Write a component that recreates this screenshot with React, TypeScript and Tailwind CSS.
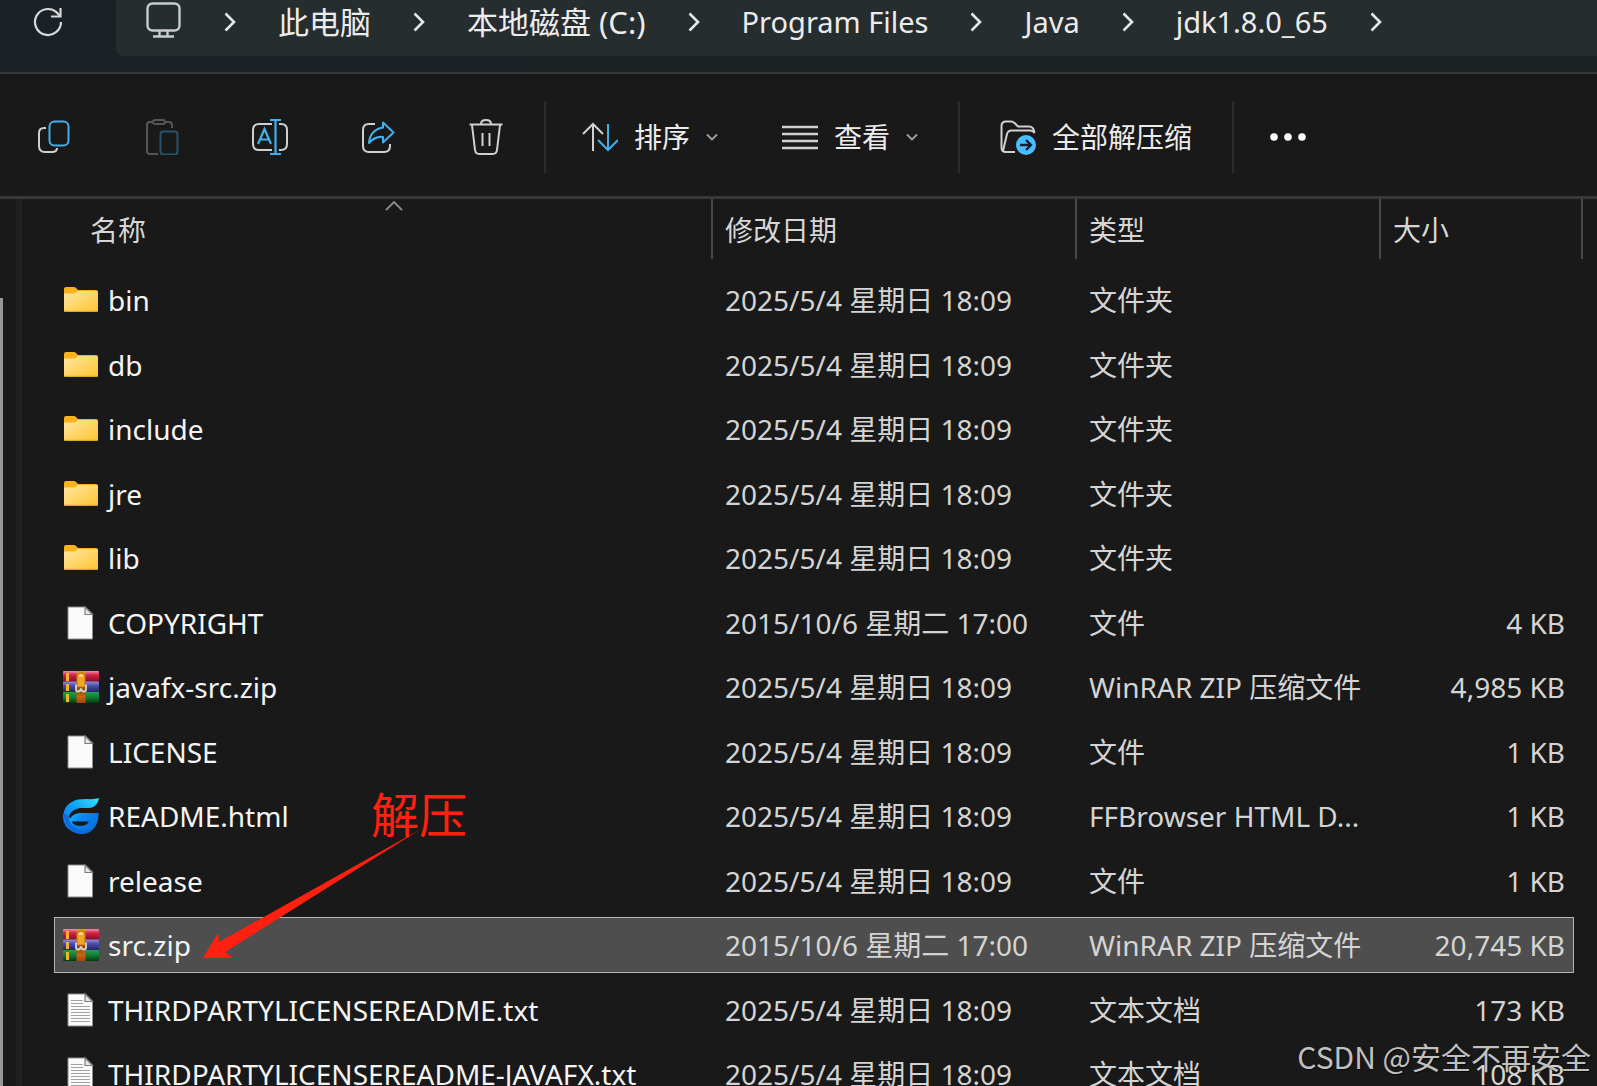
import { Fragment, useState } from 'react';

type FileKind = 'folder' | 'file' | 'zip' | 'html' | 'text';

interface FileEntry {
  name: string;
  kind: FileKind;
  modified: string;
  type: string;
  size?: string;
}

const crumbs = [
  { label: '此电脑', latin: false },
  { label: '本地磁盘 (C:)', latin: false },
  { label: 'Program Files', latin: true },
  { label: 'Java', latin: true },
  { label: 'jdk1.8.0_65', latin: true },
];

const may = '2025/5/4 星期日 18:09';
const october = '2015/10/6 星期二 17:00';

const files: FileEntry[] = [
  { name: 'bin', kind: 'folder', modified: may, type: '文件夹' },
  { name: 'db', kind: 'folder', modified: may, type: '文件夹' },
  { name: 'include', kind: 'folder', modified: may, type: '文件夹' },
  { name: 'jre', kind: 'folder', modified: may, type: '文件夹' },
  { name: 'lib', kind: 'folder', modified: may, type: '文件夹' },
  { name: 'COPYRIGHT', kind: 'file', modified: october, type: '文件', size: '4 KB' },
  { name: 'javafx-src.zip', kind: 'zip', modified: may, type: 'WinRAR ZIP 压缩文件', size: '4,985 KB' },
  { name: 'LICENSE', kind: 'file', modified: may, type: '文件', size: '1 KB' },
  { name: 'README.html', kind: 'html', modified: may, type: 'FFBrowser HTML D...', size: '1 KB' },
  { name: 'release', kind: 'file', modified: may, type: '文件', size: '1 KB' },
  { name: 'src.zip', kind: 'zip', modified: october, type: 'WinRAR ZIP 压缩文件', size: '20,745 KB' },
  { name: 'THIRDPARTYLICENSEREADME.txt', kind: 'text', modified: may, type: '文本文档', size: '173 KB' },
  { name: 'THIRDPARTYLICENSEREADME-JAVAFX.txt', kind: 'text', modified: may, type: '文本文档', size: '108 KB' },
];

const FolderIcon = () => (
  <svg viewBox="0 0 36 36" className="w-9 h-9">
    <defs>
      <linearGradient id="folder" x1="0" y1="0" x2="1" y2="1">
        <stop offset="0" stopColor="#ffe7a2" />
        <stop offset="1" stopColor="#fdc42f" />
      </linearGradient>
    </defs>
    <path d="M1 7q0-2 2-2h8q1 0 2 1l2 2h18q2 0 2 2v6H1z" fill="#f8b31c" />
    <path d="M1 11.500h11l3-2.500h18.500q1.500 0 1.500 1.500V28.500q0 1.500-1.500 1.500h-31Q1 30 1 28.500z" fill="url(#folder)" />
    <path d="M1.500 29.300h33" stroke="#d9a01f" strokeWidth="1" />
  </svg>
);

const PageIcon = ({ lined = false }: { lined?: boolean }) => (
  <svg viewBox="0 0 36 36" className="w-9 h-9">
    <path d="M5 2h17.500L29.500 9v25H5z" fill="#fafafa" stroke="#8d8d8d" strokeWidth="1" />
    <path d="M22 2v7.500h7.500z" fill="#e8e8e8" stroke="#7c7c7c" strokeWidth="1.200" />
    {lined && (
      <path d="M8 8.500h12M8 11.500h12M8 14.500h19M8 17.500h19M8 20.500h19M8 23.500h19M8 26.500h19M8 29.500h19" stroke="#a3a3a3" strokeWidth="1.200" />
    )}
  </svg>
);

const ZipIcon = () => (
  <svg viewBox="0 0 36 36" className="w-9 h-9">
    <defs>
      <linearGradient id="zipRed" x1="0" y1="0" x2="0" y2="1">
        <stop offset="0" stopColor="#f58fb0" />
        <stop offset="0.350" stopColor="#d4244a" />
        <stop offset="1" stopColor="#7d0d22" />
      </linearGradient>
      <linearGradient id="zipBlue" x1="0" y1="0" x2="0" y2="1">
        <stop offset="0" stopColor="#8f8fdc" />
        <stop offset="0.400" stopColor="#4a4aa8" />
        <stop offset="1" stopColor="#23235f" />
      </linearGradient>
      <linearGradient id="zipGreen" x1="0" y1="0" x2="0" y2="1">
        <stop offset="0" stopColor="#1fa257" />
        <stop offset="0.500" stopColor="#127a35" />
        <stop offset="1" stopColor="#06380f" />
      </linearGradient>
      <linearGradient id="zipStrap" x1="0" y1="0" x2="0" y2="1">
        <stop offset="0" stopColor="#d79a25" />
        <stop offset="0.600" stopColor="#8f4a0c" />
        <stop offset="0.800" stopColor="#cc6414" />
        <stop offset="1" stopColor="#a8440a" />
      </linearGradient>
    </defs>
    <rect x="0" y="2" width="36" height="11" rx="1" fill="url(#zipRed)" />
    <rect x="0" y="12.500" width="36" height="11" rx="1" fill="url(#zipBlue)" />
    <rect x="0" y="23" width="36" height="11" rx="1" fill="url(#zipGreen)" />
    <path d="M3 4h3v8H3zM3 15h3v7H3zM3 25h3v8H3z" fill="#f5b326" />
    <rect x="13.500" y="2" width="9" height="32" fill="url(#zipStrap)" />
    <path d="M14 8q0-4 4-4t4 4v10h-8z" fill="#f0a526" stroke="#b56a10" strokeWidth="0.800" />
    <path d="M16 7.500q2-2.500 4 0" stroke="#ffe98a" strokeWidth="1.800" fill="none" />
    <path d="M13 15.500v5q0 2 2 2 2.500 0 3-3 .5 3 3 3 2 0 2-2v-5" stroke="#d4d4d4" strokeWidth="1.800" fill="none" />
  </svg>
);

const BrowserIcon = () => (
  <svg viewBox="0 0 36 36" className="w-9 h-9">
    <defs>
      <linearGradient id="ffTop" x1="0" y1="1" x2="1" y2="0">
        <stop offset="0" stopColor="#0b7ff0" />
        <stop offset="0.450" stopColor="#0a95f5" />
        <stop offset="1" stopColor="#35e0fa" />
      </linearGradient>
      <linearGradient id="ffBottom" x1="0" y1="0" x2="1" y2="0.500">
        <stop offset="0" stopColor="#19d2fb" />
        <stop offset="0.500" stopColor="#0a86f2" />
        <stop offset="1" stopColor="#0b6fdf" />
      </linearGradient>
    </defs>
    <path d="M36 0q-1 6-5 8.500Q29 10 25 10H17Q9 11 6 18 4 24 8 29l2 5Q0 29 0 18.500 1 5 15 1.500 18 1 24 1 32 1.500 36 0z" fill="url(#ffTop)" />
    <path d="M1 15q-1 8 4 14 5 7 14 7 9-.5 13.500-8Q36 22 35.500 15H16Q8 16 6 23.500h20q-2 4-8 4.500Q8 28 6 18z" fill="url(#ffBottom)" />
    <path d="M1 15q-1 8 4 14 5 7 14 7 7-.5 11-5-13 4-20-3Q5 23 6 18z" fill="#0a6bdc" />
  </svg>
);

const FileIcon = ({ kind }: { kind: FileKind }) => {
  if (kind === 'folder') return <FolderIcon />;
  if (kind === 'zip') return <ZipIcon />;
  if (kind === 'html') return <BrowserIcon />;
  return <PageIcon lined={kind === 'text'} />;
};

const CrumbChevron = () => (
  <svg viewBox="0 0 12 20" className="w-3 h-5 mx-[42px] shrink-0" fill="none" stroke="#e6e6e6" strokeWidth="2.600">
    <path d="M1.500 1.500 10 10l-8.500 8.500" />
  </svg>
);

const DownChevron = () => (
  <svg viewBox="0 0 12 8" className="w-3 h-2" fill="none" stroke="#a0a0a0" strokeWidth="1.800">
    <path d="M1 1.500l5 5 5-5" />
  </svg>
);

const iconProps = { viewBox: '0 0 36 36', className: 'w-9 h-9', fill: 'none', stroke: '#d0d0d0', strokeWidth: 2 };

const tools = [
  {
    label: '复制',
    icon: (
      <svg {...iconProps}>
        <path d="M10 9H8q-5 0-5 5v13q0 6 6 6h7q5 0 5-4" />
        <rect x="13.500" y="2.500" width="19" height="24" rx="5" stroke="#42b0ea" />
      </svg>
    ),
  },
  {
    label: '粘贴',
    disabled: true,
    icon: (
      <svg {...iconProps} stroke="#565656">
        <path d="M9 3H6Q3 3 3 6v26q0 3 3 3h8M21 3h4q3 0 3 3v3" />
        <rect x="9" y="1" width="12" height="4" rx="2" />
        <rect x="16.500" y="12.500" width="17" height="23" rx="3" stroke="#275268" />
      </svg>
    ),
  },
  {
    label: '重命名',
    icon: (
      <svg {...iconProps}>
        <path d="M20 5H7Q1 5 1 11v14q0 6 6 6h13M27 5h2q6 0 6 6v14q0 6-6 6h-2" />
        <path d="M6 25l6.500-15L19 25M8.500 20.500h8" stroke="#42b0ea" strokeWidth="2.200" />
        <path d="M18 1h11M18 35h11M23.500 1v34" stroke="#42b0ea" strokeWidth="2.200" />
      </svg>
    ),
  },
  {
    label: '共享',
    icon: (
      <svg {...iconProps}>
        <path d="M15 5H9Q3 5 3 11v16q0 6 6 6h15q6 0 6-6v-2" />
        <path d="M23 3.500 33.500 13.500 23 23.500V18q-8-1-14 6 1-13 14-15.500z" stroke="#42b0ea" strokeLinejoin="round" />
      </svg>
    ),
  },
  {
    label: '删除',
    icon: (
      <svg {...iconProps}>
        <path d="M1.500 5.500h33M4 6l3 25q.5 4 4.500 4h13q4 0 4.500-4l3-25M13 5q0-4 5-4t5 4M14.500 14v13M21.500 14v13" />
      </svg>
    ),
  },
];

const Separator = () => <span className="w-0.5 h-18 mx-2 bg-[#2c2c2c]" />;

const cellBox = 'h-14 flex items-center border-y';

export default function App() {
  const [selected, setSelected] = useState('src.zip');

  return (
    <div className="relative h-screen overflow-hidden flex flex-col bg-[#191919] text-[#ececec] font-['Noto_Sans','Noto_Sans_CJK_SC',sans-serif]">
      <header className="h-[74px] shrink-0 flex items-start border-b-2 border-[#383838] bg-linear-to-r from-[#1a2127] to-[#1a2224] to-40%">
        <button aria-label="刷新" className="w-[116px] h-11 pr-5 flex items-center justify-center">
          <svg viewBox="0 0 30 30" className="w-[30px] h-[30px]" fill="none" stroke="#d8d8d8" strokeWidth="2.200">
            <path d="M28 15A13 13 0 1 1 23.500 5.200L27 9" />
            <path d="M27.500 1v8.500H18" />
          </svg>
        </button>
        <nav aria-label="地址" className="flex-1 h-14 pb-3 pl-[30px] flex items-center rounded-bl-lg bg-[#262d2f] leading-10 whitespace-nowrap">
          <svg viewBox="0 0 36 36" className="w-9 h-9 shrink-0 -mt-1" fill="none" stroke="#c9cbcb" strokeWidth="2.400">
            <rect x="1.500" y="1.500" width="32" height="27" rx="5" />
            <path d="M13.500 29v5M21.500 29v5M7 34.500h21" />
          </svg>
          <CrumbChevron />
          {crumbs.map((crumb) => (
            <Fragment key={crumb.label}>
              <button className={crumb.latin ? 'text-[29px]' : 'text-[31px]'}>{crumb.label}</button>
              <CrumbChevron />
            </Fragment>
          ))}
        </nav>
      </header>

      <div role="toolbar" className="h-[125px] pt-[3px] shrink-0 flex items-center border-b-3 border-[#383838] text-[28px] leading-9 whitespace-nowrap">
        {tools.map((tool) => (
          <button key={tool.label} aria-label={tool.label} disabled={tool.disabled} className="w-27 h-18 flex items-center justify-center">
            {tool.icon}
          </button>
        ))}
        <span className="w-0.5 h-18 mx-1 bg-[#2c2c2c]" />
        <button className="flex items-center gap-4 px-8">
          <svg {...iconProps}>
            <path d="M11 32V5M1 15 11 5l10 10" />
            <path d="M26 5v26M16 21l10 10 10-10" stroke="#42b0ea" />
          </svg>
          排序
          <DownChevron />
        </button>
        <button className="flex items-center gap-4 px-8">
          <svg {...iconProps} strokeWidth={2.4}>
            <path d="M0 8h36M0 15h36M0 22h36M0 29h36" />
          </svg>
          查看
          <DownChevron />
        </button>
        <Separator />
        <button className="flex items-center gap-4 px-8">
          <svg {...iconProps}>
            <path d="M15 33H6q-4.500 0-4.500-4.500V7Q1.500 2.500 6 2.500h5q2 0 3.500 1.500L18 7.500h11q4.500 0 5.500 6" />
            <path d="M3 32 7 15q1-3.500 4.500-3.500H30q3 0 4.500 2.500" />
            <circle cx="26" cy="26" r="10" fill="#48bdff" stroke="none" />
            <path d="M20 26h11M26 21l5 5-5 5" stroke="#10202c" strokeWidth={2.4} />
          </svg>
          全部解压缩
        </button>
        <Separator />
        <button aria-label="更多" className="px-7">
          <svg viewBox="0 0 36 8" className="w-9 h-2" fill="#ffffff">
            <circle cx="4" cy="4" r="3.800" />
            <circle cx="18" cy="4" r="3.800" />
            <circle cx="32" cy="4" r="3.800" />
          </svg>
        </button>
      </div>

      <main className="flex-1 min-h-0 flex">
        <div className="w-[22px] shrink-0 border-r-6 border-[#212121]">
          <div className="w-[3px] h-full mt-[99px] bg-[#989898]" />
        </div>

        <div className="relative flex-1 pl-8 pr-[23px]">
          <table className="w-full table-fixed border-collapse text-[28px] leading-9 text-left whitespace-nowrap">
            <colgroup>
              <col />
              <col className="w-[364px]" />
              <col className="w-[304px]" />
              <col className="w-[193px]" />
            </colgroup>
            <thead className="text-[#d6d6d6]">
              <tr className="h-[69px] align-top">
                <th className="relative p-0 font-normal" aria-sort="ascending">
                  <button className="w-full h-15 pl-9 pt-0.5 text-left border-r-2 border-[#484848]">名称</button>
                  <svg viewBox="0 0 18 10" className="absolute top-0.5 left-[331px] w-[18px] h-2.5" fill="none" stroke="#8a8a8a" strokeWidth="1.800">
                    <path d="M1 9l8-8 8 8" />
                  </svg>
                </th>
                <th className="p-0 font-normal">
                  <button className="w-full h-15 pl-3 pt-0.5 text-left border-r-2 border-[#484848]">修改日期</button>
                </th>
                <th className="p-0 font-normal">
                  <button className="w-full h-15 pl-3 pt-0.5 text-left border-r-2 border-[#484848]">类型</button>
                </th>
                <th className="relative p-0 font-normal">
                  <button className="w-full h-15 pl-3 pt-0.5 text-left">大小</button>
                  <span className="absolute top-0 -right-[9px] w-0.5 h-15 bg-[#484848]" />
                </th>
              </tr>
            </thead>
            <tbody>
              {files.map((file) => {
                const active = file.name === selected;
                const tone = active ? 'bg-[#4e4e4e] border-[#b4b4b4]' : 'border-transparent';
                return (
                  <tr key={file.name} className="h-16 even:h-[65px] text-[#d4d4d4]" onClick={() => setSelected(file.name)}>
                    <td className="p-0">
                      <div className={`${cellBox} ${tone} border-l pl-2 gap-[9px] text-[#f4f4f4]`}>
                        <FileIcon kind={file.kind} />
                        {file.name}
                      </div>
                    </td>
                    <td className="p-0">
                      <div className={`${cellBox} ${tone} pl-3`}>{file.modified}</div>
                    </td>
                    <td className="p-0">
                      <div className={`${cellBox} ${tone} pl-3`}>{file.type}</div>
                    </td>
                    <td className="p-0">
                      <div className={`${cellBox} ${tone} border-r pr-2 justify-end`}>{file.size}</div>
                    </td>
                  </tr>
                );
              })}
            </tbody>
          </table>

          {/* hand-drawn note pointing at src.zip */}
          <div className="absolute left-[181px] top-[580px] pointer-events-none text-[#ff2010]">
            <p className="pl-[168px] text-[48px] leading-[72px]">解压</p>
            <svg viewBox="0 0 218 130" className="absolute left-0 top-[50px] w-[218px] h-[130px]" fill="currentColor">
              <path d="M0 129 15 104l1 9L218 0 22 123l8 6z" />
            </svg>
          </div>
        </div>
      </main>

      <p className="absolute right-1.5 bottom-2.5 pointer-events-none font-['Noto_Sans_CJK_SC',sans-serif] text-[30px] leading-10 text-[#c0c0c0] text-shadow-[1px_1px_1px_#00000099]">
        CSDN @安全不再安全
      </p>
    </div>
  );
}
